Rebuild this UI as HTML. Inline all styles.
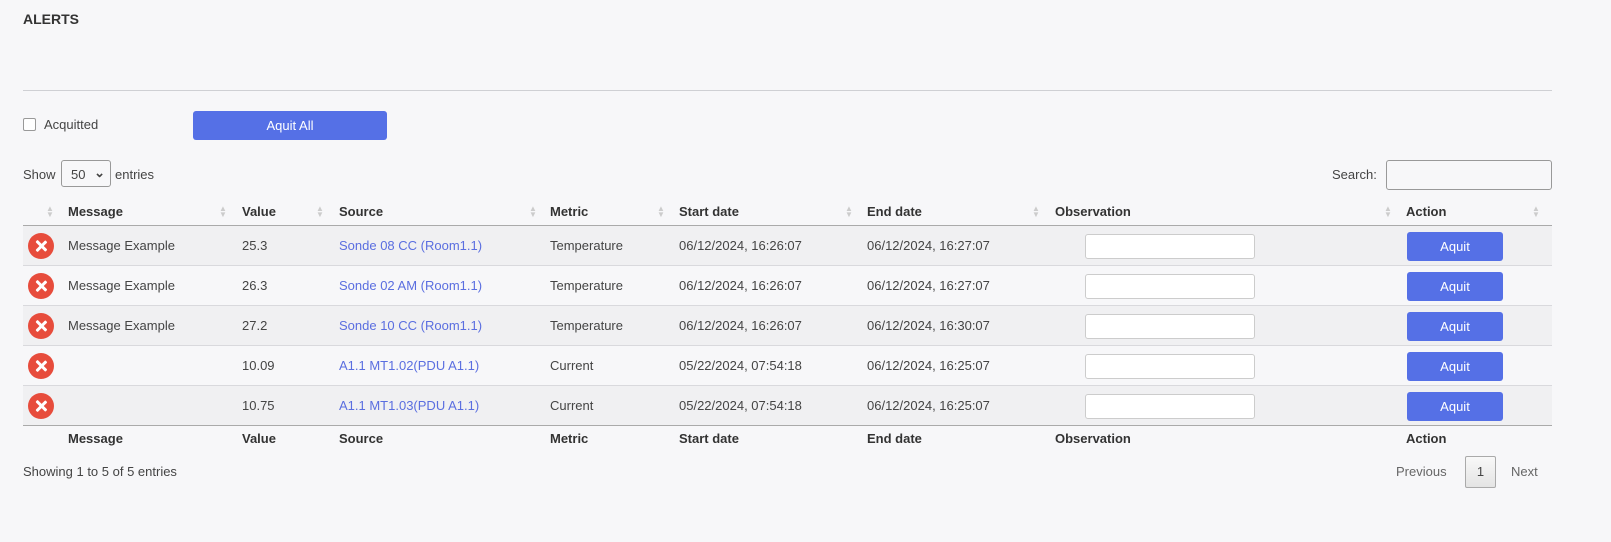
<!DOCTYPE html>
<html><head><meta charset="utf-8"><style>
body{margin:0;background:#f7f7f9;font-family:"Liberation Sans",sans-serif;font-size:13px;color:#444;width:1611px;height:542px;overflow:hidden;position:relative}
.a{position:absolute}
.t{font-weight:bold;color:#333}
.hr{left:23px;width:1529px;height:1px;background:#cfd0d4}
.btn{background:#5570e6;color:#fff;border-radius:3px;text-align:center}
.row{left:23px;width:1529px;height:40px;border-bottom:1px solid #d9d9dd;box-sizing:border-box}
.row.s{background:#f0f0f2}
.row span{position:absolute;top:12px}
.x{position:absolute;left:5px;top:7px;width:26px;height:26px;border-radius:50%;background:#e74c3c}
.x:before,.x:after{content:"";position:absolute;left:12px;top:6px;width:2.5px;height:14px;background:#fff;transform:rotate(45deg);border-radius:1px}
.x:after{transform:rotate(-45deg)}
.lnk{color:#5a6ee0}
.inp{position:absolute;left:1062px;top:8px;width:168px;height:23px;background:#fff;border:1px solid #ccc;border-radius:3px}
.ab{position:absolute;left:1384px;top:6px;width:96px;height:29px;line-height:29px}
.hd{font-weight:bold;color:#333;top:204px}
.ar{position:absolute;color:#ccc;font-size:8px;line-height:6px}
</style></head><body>
<div class="a t" style="left:23px;top:11px;font-size:14px">ALERTS</div>
<div class="a hr" style="top:90px"></div>
<div class="a" style="left:23px;top:118px;width:11px;height:11px;border:1px solid #999;border-radius:2px;background:#fff"></div>
<div class="a" style="left:44px;top:117px">Acquitted</div>
<div class="a btn" style="left:193px;top:111px;width:194px;height:29px;line-height:29px">Aquit All</div>
<div class="a" style="left:23px;top:167px">Show</div>
<div class="a" style="left:61px;top:160px;width:50px;height:27px;border:1px solid #999;border-radius:3px;background:#f7f7f9;box-sizing:border-box;padding:6px 0 0 9px">50 <span style="position:absolute;right:5px;top:4px;font-weight:bold">⌄</span></div>
<div class="a" style="left:115px;top:167px">entries</div>
<div class="a" style="left:1332px;top:167px">Search:</div>
<div class="a" style="left:1386px;top:160px;width:166px;height:30px;border:1px solid #999;border-radius:3px;box-sizing:border-box;background:#f7f7f9"></div>

<div class="a hd" style="left:68px">Message</div>
<div class="a hd" style="left:242px">Value</div>
<div class="a hd" style="left:339px">Source</div>
<div class="a hd" style="left:550px">Metric</div>
<div class="a hd" style="left:679px">Start date</div>
<div class="a hd" style="left:867px">End date</div>
<div class="a hd" style="left:1055px">Observation</div>
<div class="a hd" style="left:1406px">Action</div>
<div class="ar" style="left:46px;top:206px">▲<br>▼</div>
<div class="ar" style="left:219px;top:206px">▲<br>▼</div>
<div class="ar" style="left:316px;top:206px">▲<br>▼</div>
<div class="ar" style="left:529px;top:206px">▲<br>▼</div>
<div class="ar" style="left:657px;top:206px">▲<br>▼</div>
<div class="ar" style="left:845px;top:206px">▲<br>▼</div>
<div class="ar" style="left:1032px;top:206px">▲<br>▼</div>
<div class="ar" style="left:1384px;top:206px">▲<br>▼</div>
<div class="ar" style="left:1532px;top:206px">▲<br>▼</div>
<div class="a" style="left:23px;top:225px;width:1529px;height:1px;background:#aaa"></div>

<div class="a row s" style="top:226px"><div class="x"></div><span style="left:45px">Message Example</span><span style="left:219px">25.3</span><span class="lnk" style="left:316px">Sonde 08 CC (Room1.1)</span><span style="left:527px">Temperature</span><span style="left:656px">06/12/2024, 16:26:07</span><span style="left:844px">06/12/2024, 16:27:07</span><div class="inp"></div><div class="btn ab">Aquit</div></div>
<div class="a row" style="top:266px"><div class="x"></div><span style="left:45px">Message Example</span><span style="left:219px">26.3</span><span class="lnk" style="left:316px">Sonde 02 AM (Room1.1)</span><span style="left:527px">Temperature</span><span style="left:656px">06/12/2024, 16:26:07</span><span style="left:844px">06/12/2024, 16:27:07</span><div class="inp"></div><div class="btn ab">Aquit</div></div>
<div class="a row s" style="top:306px"><div class="x"></div><span style="left:45px">Message Example</span><span style="left:219px">27.2</span><span class="lnk" style="left:316px">Sonde 10 CC (Room1.1)</span><span style="left:527px">Temperature</span><span style="left:656px">06/12/2024, 16:26:07</span><span style="left:844px">06/12/2024, 16:30:07</span><div class="inp"></div><div class="btn ab">Aquit</div></div>
<div class="a row" style="top:346px"><div class="x"></div><span style="left:219px">10.09</span><span class="lnk" style="left:316px">A1.1 MT1.02(PDU A1.1)</span><span style="left:527px">Current</span><span style="left:656px">05/22/2024, 07:54:18</span><span style="left:844px">06/12/2024, 16:25:07</span><div class="inp"></div><div class="btn ab">Aquit</div></div>
<div class="a row s" style="top:386px;border-bottom:1px solid #aaa"><div class="x"></div><span style="left:219px">10.75</span><span class="lnk" style="left:316px">A1.1 MT1.03(PDU A1.1)</span><span style="left:527px">Current</span><span style="left:656px">05/22/2024, 07:54:18</span><span style="left:844px">06/12/2024, 16:25:07</span><div class="inp"></div><div class="btn ab">Aquit</div></div>

<div class="a hd" style="left:68px;top:431px">Message</div>
<div class="a hd" style="left:242px;top:431px">Value</div>
<div class="a hd" style="left:339px;top:431px">Source</div>
<div class="a hd" style="left:550px;top:431px">Metric</div>
<div class="a hd" style="left:679px;top:431px">Start date</div>
<div class="a hd" style="left:867px;top:431px">End date</div>
<div class="a hd" style="left:1055px;top:431px">Observation</div>
<div class="a hd" style="left:1406px;top:431px">Action</div>

<div class="a" style="left:23px;top:464px">Showing 1 to 5 of 5 entries</div>
<div class="a" style="left:1396px;top:464px;color:#666">Previous</div>
<div class="a" style="left:1465px;top:456px;width:31px;height:32px;border:1px solid #aaa;border-radius:2px;box-sizing:border-box;background:linear-gradient(#f8f8f8,#e4e4e4);text-align:center;line-height:30px">1</div>
<div class="a" style="left:1511px;top:464px;color:#666">Next</div>
</body></html>
